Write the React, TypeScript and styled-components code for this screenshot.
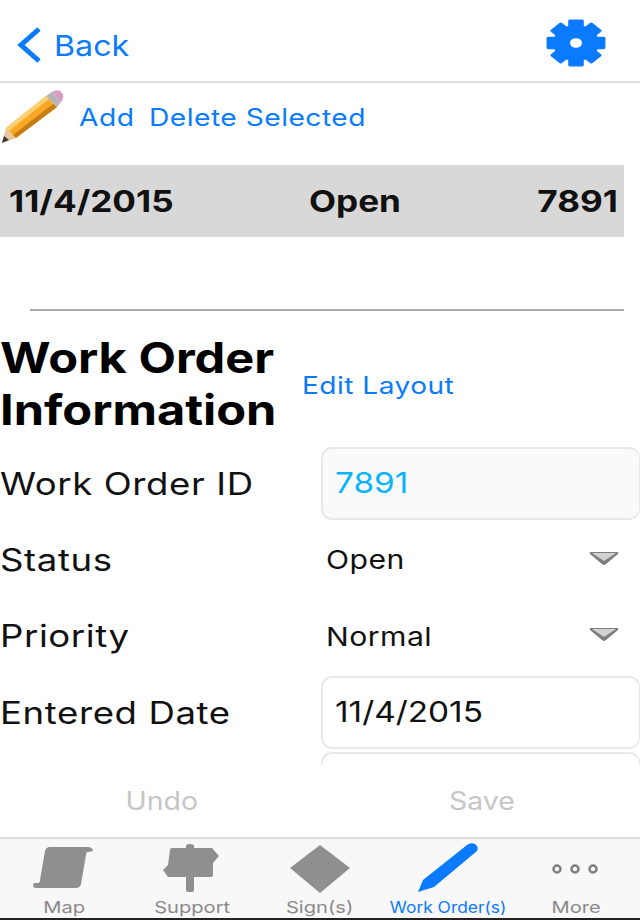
import React from "react";
import styled, { createGlobalStyle, css } from "styled-components";

const Global = createGlobalStyle`
  html, body { margin: 0; padding: 0; background: #fff; }
  body { font-family: Inter, "Liberation Sans", sans-serif; }
`;

const blue = "#0a7aff";
const gray = "#8f8f8f";

// the reference is a stretched capture, so the text is wider than it is tall
const stretched = (x: number, origin = "left") => css`
  display: inline-block;
  white-space: nowrap;
  transform: scaleX(${x});
  transform-origin: ${origin} center;
`;

const Screen = styled.div`
  width: 640px;
  height: 920px;
  display: flex;
  flex-direction: column;
  overflow: hidden;
  background: #fff;
`;

const NavBar = styled.div`
  height: 83px;
  flex: none;
  box-sizing: border-box;
  border-bottom: 2px solid #dedede;
  display: flex;
  align-items: center;
  padding: 9px 34px 0 14px;
`;

const BackLink = styled.div`
  display: flex;
  align-items: center;
  gap: 12px;
  color: ${blue};
  font-size: 29px;
`;

const BackText = styled.span`
  ${stretched(1.11)}
`;

const GearIcon = styled.svg`
  width: 60px;
  height: 48px;
  margin-top: -4px;
  display: block;
`;

const Spacer = styled.div`
  flex: 1;
`;

const ActionRow = styled.div`
  height: 82px;
  flex: none;
  box-sizing: border-box;
  display: flex;
  align-items: flex-start;
  padding-top: 6px;
`;

const ActionLinks = styled.div`
  display: flex;
  gap: 23px;
  margin: 14px 0 0 15px;
  color: ${blue};
  font-size: 24px;
  line-height: 30px;
  letter-spacing: 0.4px;
`;

const ActionLink = styled.span`
  ${stretched(1.175)}
`;

const ListRow = styled.div`
  width: 624px;
  height: 72px;
  flex: none;
  background: #d8d8d8;
  display: grid;
  grid-template-columns: 300px 1fr auto;
  align-items: center;
  box-sizing: border-box;
  padding: 0 6px 0 9px;
  font-size: 30px;
  font-weight: 700;
  color: #111;
`;

const ListCell = styled.span<{ $end?: boolean }>`
  ${(p) => stretched(1.17, p.$end ? "right" : "left")}
`;

const Divider = styled.div`
  height: 2px;
  flex: none;
  margin: 72px 16px 0 30px;
  background: #a9a9a9;
`;

const TitleRow = styled.div`
  display: flex;
  align-items: center;
  flex: none;
  box-sizing: border-box;
  height: 136px;
  padding-top: 9px;
`;

const Title = styled.h1`
  margin: 0;
  width: 302px;
  font-size: 42px;
  line-height: 52px;
  font-weight: 700;
  color: #000;
`;

const TitleLine = styled.span`
  ${stretched(1.16)}
  display: block;
`;

const EditLink = styled.span`
  ${stretched(1.17)}
  color: ${blue};
  font-size: 24px;
  letter-spacing: 0.4px;
  margin-top: 3px;
`;

const Form = styled.div`
  flex: 1;
  min-height: 0;
  overflow: hidden;
  display: flex;
  flex-direction: column;
  gap: 3px;
`;

const FieldRow = styled.div`
  height: 73.3px;
  flex: none;
  display: flex;
  align-items: center;
`;

const LabelCell = styled.div`
  width: 321px;
  flex: none;
  margin-top: -1px;
`;

const Label = styled.span`
  ${stretched(1.18)}
  font-size: 31px;
  letter-spacing: 0.5px;
  color: #111;
`;

const InputBox = styled.div<{ $readOnly?: boolean }>`
  flex: 1;
  align-self: stretch;
  display: flex;
  align-items: center;
  box-sizing: border-box;
  padding: 0 12px 2px;
  border: 2px solid #e8e8e8;
  border-right-width: 1px;
  border-radius: 11px;
  font-size: 29px;
  color: ${(p) => (p.$readOnly ? "#0cb4ff" : "#111")};
  background: ${(p) => (p.$readOnly ? "#fafafa" : "#fff")};
`;

const InputValue = styled.span`
  ${stretched(1.15)}
`;

const Select = styled.div`
  flex: 1;
  display: flex;
  align-items: center;
  justify-content: space-between;
  padding: 0 21px 0 5px;
  font-size: 26px;
  letter-spacing: 0.4px;
  color: #111;
`;

const SelectValue = styled.span`
  ${stretched(1.16)}
`;

const CaretIcon = styled.svg`
  width: 30px;
  height: 18px;
  margin-bottom: 4px;
  display: block;
`;

const SaveBar = styled.div`
  height: 72px;
  flex: none;
  background: #fff;
  display: flex;
  color: #c6c6c6;
  font-size: 25px;
`;

const SaveButton = styled.div`
  flex: 1;
  display: flex;
  align-items: center;
  justify-content: center;
  padding-left: 4px;
`;

const SaveText = styled.span`
  ${stretched(1.14, "center")}
`;

const TabBar = styled.div`
  height: 83px;
  flex: none;
  box-sizing: border-box;
  background: #f8f8f8;
  border-top: 2px solid #dcdcdc;
  border-bottom: 2px solid #222;
  display: grid;
  grid-template-columns: repeat(5, 1fr);
`;

const Tab = styled.div`
  display: flex;
  flex-direction: column;
  align-items: center;
  justify-content: flex-start;
`;

const TabLabel = styled.span<{ $active?: boolean }>`
  ${(p) => stretched(p.$active ? 1.12 : 1.22, "center")}
  color: ${(p) => (p.$active ? blue : "#8a8a8a")};
  font-size: ${(p) => (p.$active ? "15.5px" : "16.5px")};
  line-height: 21px;
`;

const TabIcon = styled.svg`
  width: 80px;
  height: 56px;
  flex: none;
  display: block;
  margin-bottom: 2px;
`;

const Gear = () => {
  const teeth = [0, 45, 90, 135, 180, 225, 270, 315];
  return (
    <GearIcon viewBox="-25 -25 50 50" preserveAspectRatio="none">
      <g fill={blue}>
        <circle r="19" />
        {teeth.map((a) => (
          <rect key={a} x="-6.5" y="-24.5" width="13" height="12" rx="1.5" transform={`rotate(${a})`} />
        ))}
      </g>
      <circle r="5" fill="#fff" />
    </GearIcon>
  );
};

const Pencil = () => (
  <svg width="64" height="56" viewBox="0 0 64 56">
    <polygon points="2,54 6,39 16,49" fill="#e8c79a" />
    <polygon points="2,54 4,47 9,51" fill="#3a3a3a" />
    <polygon points="6,39 46,7 57,18 16,49" fill="#f9a825" />
    <polygon points="6,39 46,7 49,10 9,42" fill="#fcd073" />
    <polygon points="13,46 53,15 57,18 16,49" fill="#c67c12" />
    <polygon points="46,7 52,3 61,13 57,18" fill="#b5b5b5" />
    <path d="M52 3 Q56 0 60 2 Q64 5 63 9 Q62 12 61 13 Z" fill="#d99ac4" />
  </svg>
);

const Caret = () => (
  <CaretIcon viewBox="0 0 30 18">
    <path d="M2 3 H28 Q30 3 29 5 L17 15 Q15 17 13 15 L1 5 Q0 3 2 3 Z" fill="#7d7d7d" />
    <polygon points="3,4 27,4 15,12" fill="#d2d2d2" />
  </CaretIcon>
);

export default function App() {
  return (
    <Screen>
      <Global />
      <NavBar>
        <BackLink>
          <svg width="28" height="38" viewBox="0 0 28 38">
            <path d="M25 3 L7 19 L25 35" fill="none" stroke={blue} strokeWidth="5" />
          </svg>
          <BackText>Back</BackText>
        </BackLink>
        <Spacer />
        <Gear />
      </NavBar>
      <ActionRow>
        <Pencil />
        <ActionLinks>
          <ActionLink>Add</ActionLink>
          <ActionLink>Delete Selected</ActionLink>
        </ActionLinks>
      </ActionRow>
      <ListRow>
        <ListCell>11/4/2015</ListCell>
        <ListCell>Open</ListCell>
        <ListCell $end>7891</ListCell>
      </ListRow>
      <Divider />
      <TitleRow>
        <Title>
          <TitleLine>Work Order</TitleLine>
          <TitleLine>Information</TitleLine>
        </Title>
        <EditLink>Edit Layout</EditLink>
      </TitleRow>
      <Form>
        <FieldRow>
          <LabelCell>
            <Label>Work Order ID</Label>
          </LabelCell>
          <InputBox $readOnly>
            <InputValue>7891</InputValue>
          </InputBox>
        </FieldRow>
        <FieldRow>
          <LabelCell>
            <Label>Status</Label>
          </LabelCell>
          <Select>
            <SelectValue>Open</SelectValue>
            <Caret />
          </Select>
        </FieldRow>
        <FieldRow>
          <LabelCell>
            <Label>Priority</Label>
          </LabelCell>
          <Select>
            <SelectValue>Normal</SelectValue>
            <Caret />
          </Select>
        </FieldRow>
        <FieldRow>
          <LabelCell>
            <Label>Entered Date</Label>
          </LabelCell>
          <InputBox>
            <InputValue>11/4/2015</InputValue>
          </InputBox>
        </FieldRow>
        <FieldRow>
          <LabelCell />
          <InputBox />
        </FieldRow>
      </Form>
      <SaveBar>
        <SaveButton>
          <SaveText>Undo</SaveText>
        </SaveButton>
        <SaveButton>
          <SaveText>Save</SaveText>
        </SaveButton>
      </SaveBar>
      <TabBar>
        <Tab>
          <TabIcon viewBox="0 0 80 56">
            <path d="M26 8 H65 Q69 9 69 12 L64 13 Q62 13 62 16 L57 45 Q56 49 52 49 H12 Q9 49 9 46 Q9 44 11 44 H14 Q16 44 16 41 L21 12 Q22 8 26 8 Z" fill={gray} />
          </TabIcon>
          <TabLabel>Map</TabLabel>
        </Tab>
        <Tab>
          <TabIcon viewBox="0 0 80 56">
            <path d="M34 7 Q34 5 38 5 Q42 5 42 7 V9 H60 L67 17 L61 24 V36 Q61 38 58 38 H42 V51 Q42 53 40 53 H36 Q34 53 34 51 V38 H16 L11 31 L16 26 L18 11 Q18 9 20 9 H34 Z" fill={gray} />
          </TabIcon>
          <TabLabel>Support</TabLabel>
        </Tab>
        <Tab>
          <TabIcon viewBox="0 0 80 56">
            <polygon points="40,6 70,29 40,54 10,29" fill={gray} />
          </TabIcon>
          <TabLabel>Sign(s)</TabLabel>
        </Tab>
        <Tab>
          <TabIcon viewBox="0 0 80 56">
            <path d="M59 6 Q63 3 67 5 Q71 8 69 12 L26 48 L10 53 L15 41 Z" fill={blue} />
          </TabIcon>
          <TabLabel $active>Work Order(s)</TabLabel>
        </Tab>
        <Tab>
          <TabIcon viewBox="0 0 80 56">
            <g fill="none" stroke="#7f7f7f" strokeWidth="2.5">
              <circle cx="21" cy="30" r="3.5" />
              <circle cx="39" cy="30" r="3.5" />
              <circle cx="57" cy="30" r="3.5" />
            </g>
          </TabIcon>
          <TabLabel>More</TabLabel>
        </Tab>
      </TabBar>
    </Screen>
  );
}
